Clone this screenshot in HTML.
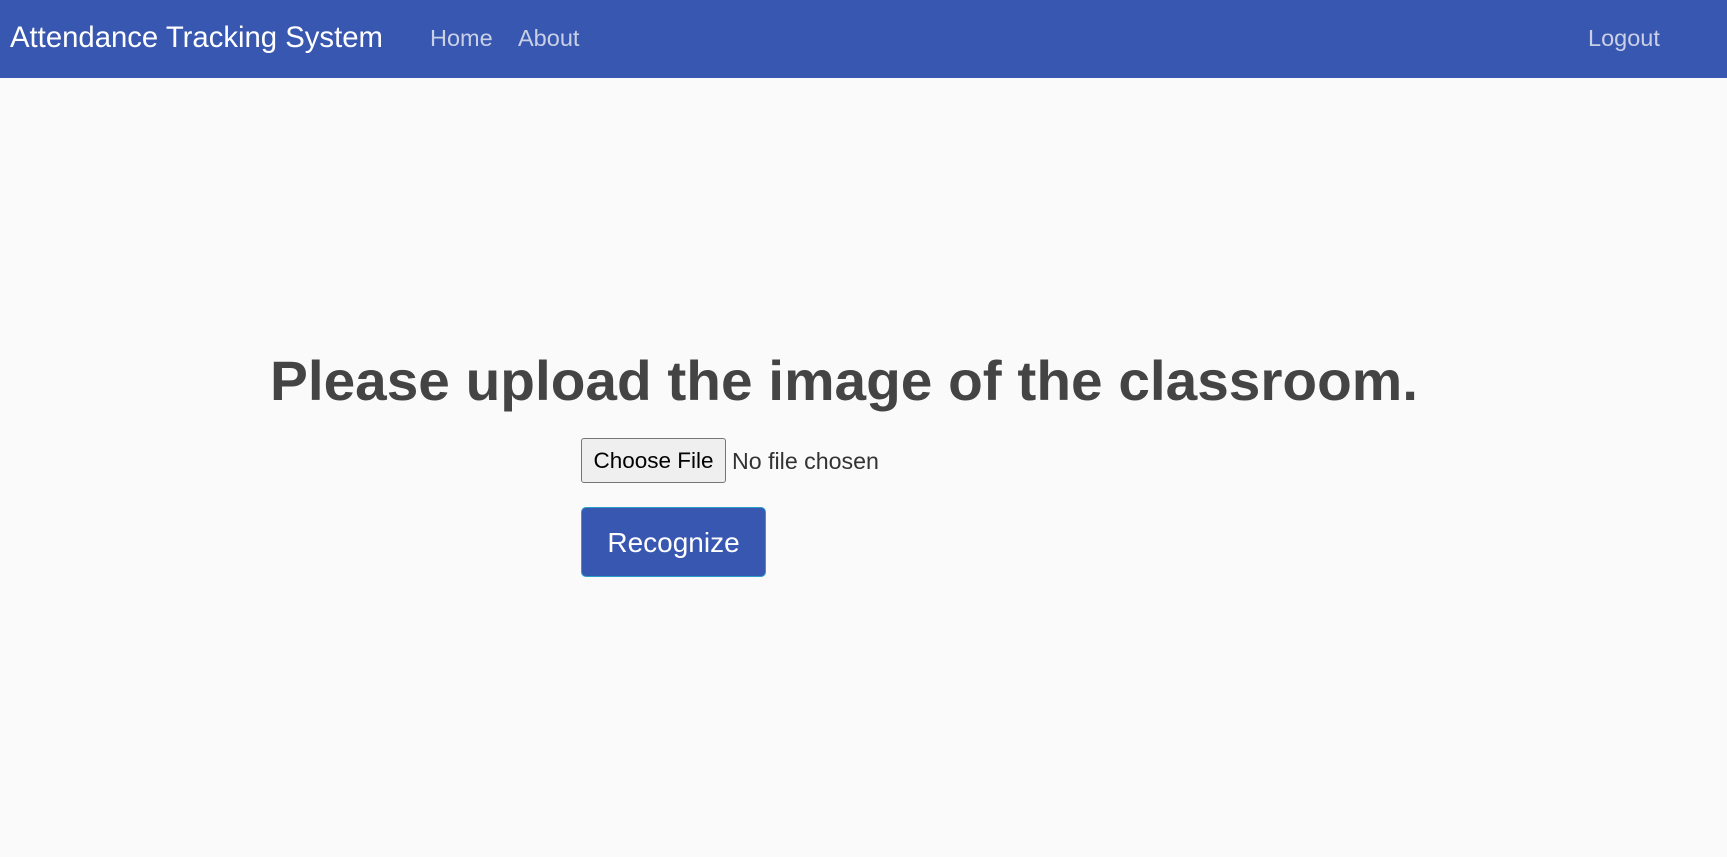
<!DOCTYPE html>
<html><head><meta charset="utf-8"><style>
html,body{margin:0;padding:0;width:1727px;height:857px;background:#fafafa;overflow:hidden;font-family:"Liberation Sans",sans-serif;}
.nav{position:absolute;left:0;top:0;width:1727px;height:78px;background:#3857b0;}
.nav span{position:absolute;top:0;line-height:76px;white-space:nowrap;}
.brand{left:10px;color:#fff;font-size:29.3px;}
.link{color:#c9d0e6;font-size:23.5px;}
svg{position:absolute;left:0;top:0;}
.file{position:absolute;left:581px;top:438px;width:143px;height:43px;border:1px solid #767676;border-radius:3px;background:#efefef;box-sizing:content-box;font-size:22.5px;line-height:43px;text-align:center;color:#000;}
.nofile{position:absolute;left:732px;top:439px;line-height:45px;font-size:23.2px;color:#333;}
.btn{position:absolute;left:581px;top:507px;width:183px;height:68px;border:1px solid #2aa0c8;border-radius:5px;background:#3857b0;color:#fff;font-size:28px;line-height:70px;text-align:center;}
</style></head><body>
<div class="nav">
<span class="brand">Attendance Tracking System</span>
<span class="link" style="left:430px">Home</span>
<span class="link" style="left:518px">About</span>
<span class="link" style="left:1588px">Logout</span>
</div>
<svg width="1727" height="857"><text x="270" y="400" font-family="Liberation Sans, sans-serif" font-weight="bold" font-size="56" fill="#444" textLength="1148" lengthAdjust="spacingAndGlyphs">Please upload the image of the classroom.</text></svg>
<div class="file">Choose File</div>
<div class="nofile">No file chosen</div>
<div class="btn">Recognize</div>
</body></html>
